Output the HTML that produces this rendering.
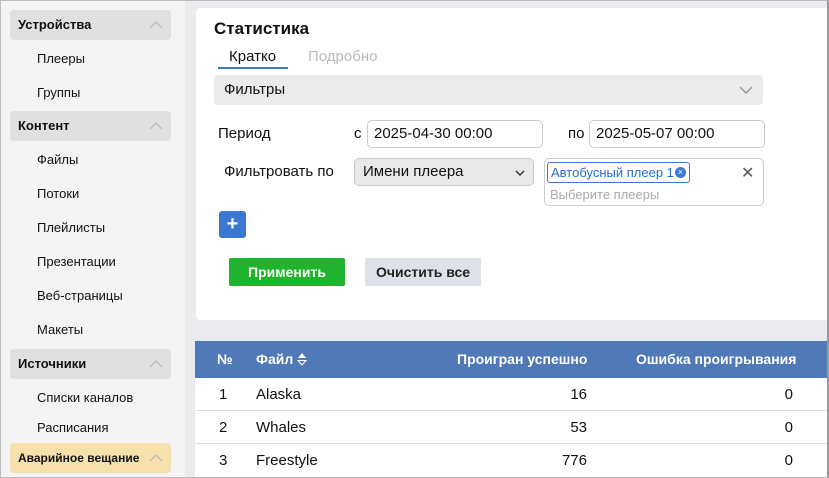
<!DOCTYPE html>
<html><head><meta charset="utf-8"><style>
*{box-sizing:border-box;margin:0;padding:0}
body{width:829px;height:478px;overflow:hidden;font-family:"Liberation Sans","Noto Sans CJK SC",sans-serif;background:#ebebef;position:relative;font-size:14px;color:#111}
.frame{position:absolute;left:0;top:0;width:829px;height:478px;border:1px solid #bcbcbc;border-right:2px solid #999;pointer-events:none;z-index:9}
.side{position:absolute;left:0;top:0;width:185px;height:478px;background:#f4f4f4}
.h{position:absolute;left:10px;width:161px;height:30px;background:#e0e0e0;border-radius:4px;font-weight:bold;font-size:13px;line-height:30px;padding-left:8px}
.h svg{position:absolute;right:8px;top:11px}
.it{position:absolute;left:37px;font-size:13px}
.a{position:absolute}
.card{position:absolute;left:196px;top:8px;width:632px;height:312px;background:#fff;border-radius:4px}
.box{position:absolute;border:1px solid #ccc;border-radius:5px;background:#fff;font-size:14px;padding-left:6px}
</style></head><body>
<div class="side">
<div class="h" style="top:10px">Устройства<svg width="14" height="8"><path d="M1 7L7 1L13 7" stroke="#bbb" stroke-width="1.3" fill="none"/></svg></div>
<div class="it" style="top:51px">Плееры</div>
<div class="it" style="top:85px">Группы</div>
<div class="h" style="top:111px">Контент<svg width="14" height="8"><path d="M1 7L7 1L13 7" stroke="#bbb" stroke-width="1.3" fill="none"/></svg></div>
<div class="it" style="top:152px">Файлы</div>
<div class="it" style="top:186px">Потоки</div>
<div class="it" style="top:220px">Плейлисты</div>
<div class="it" style="top:254px">Презентации</div>
<div class="it" style="top:288px">Веб-страницы</div>
<div class="it" style="top:322px">Макеты</div>
<div class="h" style="top:349px">Источники<svg width="14" height="8"><path d="M1 7L7 1L13 7" stroke="#bbb" stroke-width="1.3" fill="none"/></svg></div>
<div class="it" style="top:390px">Списки каналов</div>
<div class="it" style="top:420px">Расписания</div>
<div class="h" style="top:443px;background:#f6e1ad;font-size:12px">Аварийное вещание<svg width="14" height="8"><path d="M1 7L7 1L13 7" stroke="#bbb" stroke-width="1.3" fill="none"/></svg></div>
</div>
<div class="card">
<div class="a" style="left:18px;top:11px;font-size:17px;font-weight:bold">Статистика</div>
<div class="a" style="left:33px;top:40px;font-size:15px">Кратко</div>
<div class="a" style="left:22px;top:59px;width:70px;height:2px;background:#3a78d4"></div>
<div class="a" style="left:112px;top:40px;color:#bbb;font-size:15px">Подробно</div>
<div class="a" style="left:18px;top:67px;width:549px;height:30px;background:#ebebeb;border-radius:4px;line-height:30px;padding-left:10px;font-size:15px">Фильтры<svg style="position:absolute;right:10px;top:11px" width="14" height="8"><path d="M1 1L7 7L13 1" stroke="#999" stroke-width="1.5" fill="none"/></svg></div>
<div class="a" style="left:22px;top:117px;font-size:15px">Период</div>
<div class="a" style="left:158px;top:117px;font-size:15px">с</div>
<div class="box" style="left:171px;top:112px;width:176px;height:28px;line-height:26px;font-size:15px">2025-04-30 00:00</div>
<div class="a" style="left:372px;top:117px;font-size:15px">по</div>
<div class="box" style="left:393px;top:112px;width:176px;height:28px;line-height:26px;font-size:15px">2025-05-07 00:00</div>
<div class="a" style="left:28px;top:155px;font-size:15px">Фильтровать по</div>
<div class="box" style="left:158px;top:150px;width:180px;height:28px;line-height:26px;background:#e9e9e9;padding-left:8px;font-size:15px">Имени плеера<svg style="position:absolute;right:8px;top:11px" width="10" height="7"><path d="M1 1L5 5L9 1" stroke="#333" stroke-width="1.5" fill="none"/></svg></div>
<div class="box" style="left:348px;top:150px;width:220px;height:48px"></div>
<div class="a" style="left:351px;top:154px;width:143px;height:21px;border:1px solid #3a78d4;border-radius:3px;color:#2a6bc8;font-size:13px;line-height:19px;padding-left:3px">Автобусный плеер 1<span style="position:absolute;right:3px;top:4px;width:11px;height:11px;border-radius:50%;background:#3a78d4;color:#fff;font-size:9px;line-height:11px;text-align:center">×</span></div>
<div class="a" style="left:545px;top:155px;color:#555;font-size:16px">✕</div>
<div class="a" style="left:354px;top:179px;color:#aaa;font-size:13px">Выберите плееры</div>
<div class="a" style="left:23px;top:203px;width:27px;height:27px;background:#3a78d4;border-radius:3px;color:#fff;font-size:20px;text-align:center;line-height:26px;font-weight:bold">+</div>
<div class="a" style="left:33px;top:250px;width:116px;height:28px;background:#1fb42b;border-radius:2px;color:#fff;text-align:center;line-height:28px;font-size:14px;font-weight:bold">Применить</div>
<div class="a" style="left:169px;top:250px;width:116px;height:28px;background:#dde2e8;border-radius:2px;text-align:center;line-height:28px;font-size:14px;font-weight:bold;color:#222">Очистить все</div>
</div>
<div class="a" style="left:195px;top:341px;width:633px;height:37px;background:#507ab7;color:#fff;font-size:14px;font-weight:bold;line-height:37px">
<span class="a" style="left:22px">№</span>
<span class="a" style="left:61px">Файл <svg width="10" height="14" style="vertical-align:-2px"><path d="M1 6L5 1L9 6Z" fill="#fff"/><path d="M1 8.5L5 13L9 8.5Z" fill="none" stroke="#fff"/></svg></span>
<span class="a" style="left:262px">Проигран успешно</span>
<span class="a" style="left:441px">Ошибка проигрывания</span>
</div>
<div class="a" style="left:195px;top:378px;width:633px;height:100px;background:#fff;font-size:15px">
<div class="a" style="top:0;left:0;width:633px;height:33px;border-bottom:1px solid #ddd"></div>
<div class="a" style="top:33px;left:0;width:633px;height:33px;border-bottom:1px solid #ddd"></div>
<span class="a" style="left:24px;top:8px">1</span><span class="a" style="left:61px;top:8px">Alaska</span><span class="a" style="right:241px;top:8px">16</span><span class="a" style="right:35px;top:8px">0</span>
<span class="a" style="left:24px;top:41px">2</span><span class="a" style="left:61px;top:41px">Whales</span><span class="a" style="right:241px;top:41px">53</span><span class="a" style="right:35px;top:41px">0</span>
<span class="a" style="left:24px;top:74px">3</span><span class="a" style="left:61px;top:74px">Freestyle</span><span class="a" style="right:241px;top:74px">776</span><span class="a" style="right:35px;top:74px">0</span>
</div>
<div class="frame"></div>
</body></html>
